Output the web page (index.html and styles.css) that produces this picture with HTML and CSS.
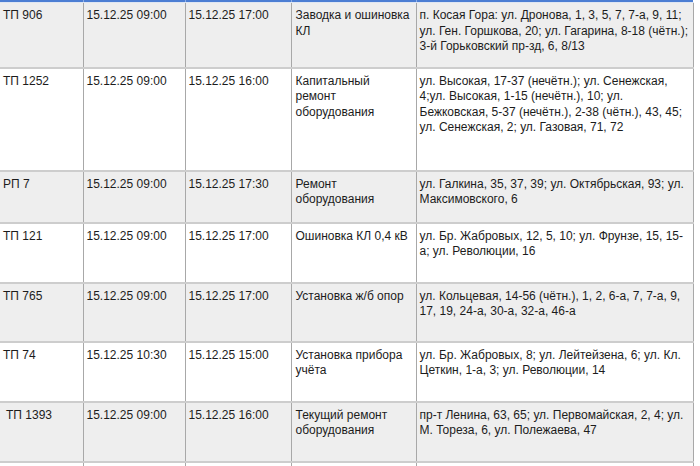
FILE: index.html
```html
<!DOCTYPE html>
<html lang="ru">
<head>
<meta charset="utf-8">
<title>Отключения</title>
<link rel="stylesheet" href="styles.css">
</head>
<body>
<table class="grid">
  <colgroup>
    <col class="c1"><col class="c2"><col class="c3"><col class="c4"><col class="c5">
  </colgroup>
  <thead>
    <tr class="head"><th></th><th></th><th></th><th></th><th></th></tr>
  </thead>
  <tbody>
    <tr class="row gray r65">
      <td>ТП 906</td><td>15.12.25 09:00</td><td>15.12.25 17:00</td>
      <td class="work">Заводка и ошиновка КЛ</td>
      <td>п. Косая Гора: ул. Дронова, 1, 3, 5, 7, 7-а, 9, 11; ул. Ген. Горшкова, 20; ул. Гагарина, 8-18 (чётн.); 3-й Горьковский пр-зд, 6, 8/13</td>
    </tr>
    <tr class="row r103">
      <td>ТП 1252</td><td>15.12.25 09:00</td><td>15.12.25 16:00</td>
      <td class="work">Капитальный ремонт оборудования</td>
      <td>ул. Высокая, 17-37 (нечётн.); ул. Сенежская, 4;ул. Высокая, 1-15 (нечётн.), 10; ул. Бежковская, 5-37 (нечётн.), 2-38 (чётн.), 43, 45; ул. Сенежская, 2; ул. Газовая, 71, 72</td>
    </tr>
    <tr class="row gray r52">
      <td>РП 7</td><td>15.12.25 09:00</td><td>15.12.25 17:30</td>
      <td class="work">Ремонт оборудования</td>
      <td>ул. Галкина, 35, 37, 39; ул. Октябрьская, 93; ул. Максимовского, 6</td>
    </tr>
    <tr class="row r60">
      <td>ТП 121</td><td>15.12.25 09:00</td><td>15.12.25 17:00</td>
      <td class="work">Ошиновка КЛ 0,4 кВ</td>
      <td>ул. Бр. Жабровых, 12, 5, 10; ул. Фрунзе, 15, 15-а; ул. Революции, 16</td>
    </tr>
    <tr class="row gray r59">
      <td>ТП 765</td><td>15.12.25 09:00</td><td>15.12.25 17:00</td>
      <td class="work">Установка ж/б опор</td>
      <td>ул. Кольцевая, 14-56 (чётн.), 1, 2, 6-а, 7, 7-а, 9, 17, 19, 24-а, 30-а, 32-а, 46-а</td>
    </tr>
    <tr class="row r60">
      <td>ТП 74</td><td>15.12.25 10:30</td><td>15.12.25 15:00</td>
      <td class="work">Установка прибора учёта</td>
      <td>ул. Бр. Жабровых, 8; ул. Лейтейзена, 6; ул. Кл. Цеткин, 1-а, 3; ул. Революции, 14</td>
    </tr>
    <tr class="row gray r60">
      <td class="indent">ТП 1393</td><td>15.12.25 09:00</td><td>15.12.25 16:00</td>
      <td class="work">Текущий ремонт оборудования</td>
      <td>пр-т Ленина, 63, 65; ул. Первомайская, 2, 4; ул. М. Тореза, 6, ул. Полежаева, 47</td>
    </tr>
    <tr class="row r60">
      <td></td><td></td><td></td><td></td><td></td>
    </tr>
  </tbody>
</table>
</body>
</html>
```

FILE: styles.css
```css
html, body {
  margin: 0;
  padding: 0;
  background: #ffffff;
  overflow: hidden;
  height: 466px;
}

.grid {
  width: 693px;
  table-layout: fixed;
  border-collapse: collapse;
  font-family: "Liberation Sans", Arial, sans-serif;
  font-size: 12px;
  line-height: 15.5px;
  color: #1c1c1c;
}

.c1 { width: 83px; }
.c2 { width: 102px; }
.c3 { width: 106px; }
.c4 { width: 125px; }
.c5 { width: 277px; }

.head th {
  height: 2px;
  padding: 0;
  background: #4c7ed3;
  border-left: 1px solid #8fb0e8;
  border-bottom: 1px solid #dfe6f2;
}
.head th:first-child { border-left: none; }

.row td {
  vertical-align: top;
  padding: 5px 3px 0 3px;
  border-left: 1px solid #a8a8a8;
  border-bottom: 2px solid #cdcdcd;
  overflow: hidden;
}
.row td:first-child { border-left: none; }
.row td:last-child { border-right: 1px solid #a8a8a8; }

.row td.work { padding-left: 4px; padding-right: 6px; }

.gray td { background: #eeeeee; }

.indent { text-indent: 3px; }

.r65 { height: 65px; }
.r103 { height: 103px; }
.r52 { height: 52px; }
.r60 { height: 60px; }
.r59 { height: 59px; }
```
